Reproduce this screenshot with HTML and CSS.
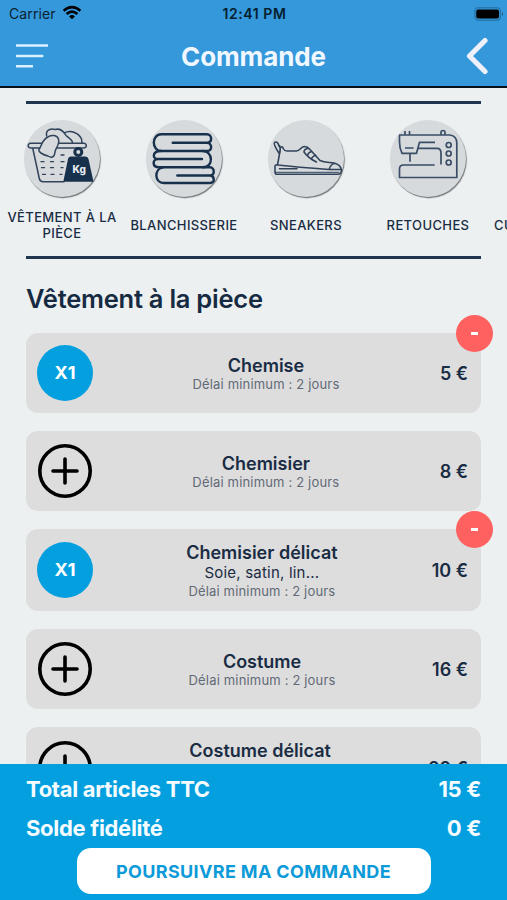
FILE: index.html
```html
<!DOCTYPE html>
<html lang="fr">
<head>
<meta charset="utf-8">
<title>Commande</title>
<link rel="stylesheet" href="styles.css">
</head>
<body>
<div class="app">
  <header class="header">
    <div class="status">
      <div class="carrier"><span>Carrier</span>
        <svg width="20" height="15" viewBox="0 0 20 15" fill="none" stroke="#000" stroke-width="2.6"><path d="M1.6 5.8Q10 -1.4 18.4 5.8"/><path d="M4.6 9Q10 4.4 15.4 9"/><path d="M7 11.4Q10 8.8 13 11.4L10 14.2Z" fill="#000" stroke="none"/></svg>
      </div>
      <div class="clock">12:41 PM</div>
      <svg class="battery" width="30" height="14" viewBox="0 0 30 14"><rect x=".8" y=".8" width="25.6" height="12.4" rx="3.6" fill="none" stroke="#2878b0" stroke-width="1.4"/><rect x="2.2" y="2.400" width="22.800" height="9.2" rx="2" fill="#000"/><path d="M28 5q2 2 0 4z" fill="#1c567f"/></svg>
    </div>
    <div class="nav">
      <svg width="32" height="26" viewBox="0 0 32 26" stroke="#d8f0ff" stroke-width="2.600"><path d="M0 2.5H32M0 13H27.3M0 23.300H17"/></svg>
      <h1>Commande</h1>
      <svg width="24" height="38" viewBox="0 0 24 38" fill="none" stroke="#eef0fa" stroke-width="5.2" stroke-linecap="round" stroke-linejoin="round"><path d="M20 3.500L4.500 19L20 34.500"/></svg>
    </div>
  </header>

  <main>
    <div class="categories">
      <div class="cat"><div class="disc">
        <svg viewBox="0 0 76 78" fill="none" stroke="#31435a" stroke-width="1.5" stroke-linejoin="round" stroke-linecap="round">
          <path d="M17.500 23.300H6.500a2.300 2.300 0 0 0 0 4.600H15.500M33.500 27.900H60a2.300 2.300 0 0 0 0-4.600H35M8.700 28L15.300 58.500Q16 61.700 19 61.700H40"/>
          <path d="M22.700 16C21 9 28 8.500 31 9.500C36 8 39 11 41 14C43 18 48 18 48.500 23M40 13C47 9.500 55 13 57.500 19L58 23"/>
          <path d="M24.300 16.700C28 14.500 33 15 34.500 19C36 25 31.500 28 31 32C30.500 38 27 38 24 36C20 35 13 32 15.300 29C18 25 18 19.500 24.300 16.700Z"/>
          <path d="M37 35H40M17 41.700H20M26.500 41.700H29.500M37 41.700H40M17.500 47.700H20.500M26.500 47.700H29.500M37 47.700H39M18.500 54.300H21.500M27 54.300H30M36 54.300H38" stroke-width="1.300"/>
          <path d="M46.500 36.500H61.500Q64 36.500 64.500 39L69.500 61.700H39.300L44 39Q44.500 36.500 46.500 36.500Z" fill="#17304c" stroke="none"/>
          <circle cx="54.300" cy="32" r="3.500" stroke="#17304c" stroke-width="3"/>
        </svg><span class="kg">Kg</span></div><p>VÊTEMENT À LA PIÈCE</p></div>
      <div class="cat"><div class="disc">
        <svg viewBox="0 0 76 78" fill="none" stroke="#17304c" stroke-width="2.400" stroke-linecap="round" stroke-linejoin="round">
          <path d="M61 14.300H15.500C5 14.300 5.500 31 15.500 31H61C67 31 66 22.700 61 22.700H26.700M61 22.700C67 22.700 66 14.300 61 14.300"/>
          <path d="M15 31C6 31 6 39 12 39C6 39 6 47.300 13 47.300H57C68 47.300 67 31 57 31M12 39H56"/>
          <path d="M17 47.300C8 49 8 63 18 63H64C69.500 63 68.500 55.500 64 55.500H31.300M64 55.500C69.500 55.500 68.500 47.300 64 47.300H57"/>
        </svg></div><p>BLANCHISSERIE</p></div>
      <div class="cat"><div class="disc">
        <svg viewBox="0 0 76 78" fill="none" stroke="#31435a" stroke-width="1.600" stroke-linecap="round" stroke-linejoin="round">
          <path d="M9.500 45L11.500 34C9 30 5 24 6.500 22.500Q9.500 20.500 11 26L12.500 28Q14 25 15.500 29Q16.500 31 19 31H28.500C32 31 33 26.500 36.500 26.500Q39.500 26.500 42 29.500L52 40.500C57 43 62 42 66 43C70 44 73 47 73.500 50Q73.500 54.300 70 54.300H9Q7 54.300 7 52V46.500Q7 44.500 9.500 45C27 47 47 48.500 61 49.500H73M11.500 48.700H29M61 49.500Q63 43.500 67 43.500M36 32Q36 29 40 28.500M39.500 36Q40 32 44 31.500M43.500 39.500Q44 36 48 35.500M36 32Q40 38 48.500 42M11.500 25.500Q13 29 11.500 34"/>
          <path d="M8 52.300H71" stroke-width="1"/>
        </svg></div><p>SNEAKERS</p></div>
      <div class="cat"><div class="disc">
        <svg viewBox="0 0 76 78" fill="none" stroke="#3a4d67" stroke-width="1.700" stroke-linejoin="round">
          <path d="M9 15H60Q66.800 16 66.800 23V57.500H9.500V49Q9.500 45 13.500 45H44.700M9.500 15V22Q9.500 28 12 33.300H26.500L29.500 22.300H45M28.500 28.300H47Q51 28.300 51 33V44.500M20 33.300V41.700M15 28H23.500M15 14.500V11M19.500 14.500V11M51 14.500V12.500Q51 10.500 53 10.500T55 12.500V14.500"/><circle cx="58.700" cy="25" r="2.500"/><circle cx="58.700" cy="33.500" r="2.500"/><circle cx="58.700" cy="42.500" r="2.500"/>
        </svg></div><p>RETOUCHES</p></div>
      <div class="cat"><div class="disc"></div><p>CUIRS ET PEAUX</p></div>
    </div>

    <h2>Vêtement à la pièce</h2>

    <div class="items">
      <div class="card"><div class="qty">X1</div><div class="info"><b>Chemise</b><small>Délai minimum : 2 jours</small></div><div class="price">5 €</div><div class="minus"></div></div>
      <div class="card"><svg class="plus" viewBox="0 0 56 56"><circle cx="28" cy="28" r="25.200"/><path d="M28 16V40M16 28H40"/></svg><div class="info"><b>Chemisier</b><small>Délai minimum : 2 jours</small></div><div class="price">8 €</div></div>
      <div class="card tall"><div class="qty">X1</div><div class="info"><b>Chemisier délicat</b><span>Soie, satin, lin...</span><small>Délai minimum : 2 jours</small></div><div class="price">10 €</div><div class="minus"></div></div>
      <div class="card"><svg class="plus" viewBox="0 0 56 56"><circle cx="28" cy="28" r="25.200"/><path d="M28 16V40M16 28H40"/></svg><div class="info"><b>Costume</b><small>Délai minimum : 2 jours</small></div><div class="price">16 €</div></div>
      <div class="card tall"><svg class="plus" viewBox="0 0 56 56"><circle cx="28" cy="28" r="25.200"/><path d="M28 16V40M16 28H40"/></svg><div class="info"><b>Costume délicat</b></div><div class="price">20 €</div></div>
    </div>
  </main>

  <footer>
    <div class="row"><span>Total articles TTC</span><span>15 €</span></div>
    <div class="row"><span>Solde fidélité</span><span>0 €</span></div>
    <button>POURSUIVRE MA COMMANDE</button>
  </footer>
</div>
</body>
</html>
```

FILE: styles.css
```css
* { box-sizing: border-box; }
body { margin: 0; font-family: Inter, "Liberation Sans", sans-serif; color: #1a2c44; }
h1, h2, p { margin: 0; }
svg { display: block; flex: none; }
.app { width: 507px; height: 900px; display: flex; flex-direction: column; overflow: hidden; background: #ecf0f1; }

.header { flex: none; height: 88px; background: #3498db; border-bottom: 2px solid #06131c; }
.status { height: 28px; padding: 0 7px 0 9px; display: grid; grid-template-columns: 1fr auto 1fr; align-items: center; font-size: 14px; color: #0c2230; }
.carrier { display: flex; align-items: center; gap: 6px; letter-spacing: .1px; margin-top: -1px; }
.carrier svg { margin-top: -2px; }
.clock { font-weight: 600; color: #06202f; font-size: 14px; letter-spacing: .55px; margin-top: -1px; }
.battery { justify-self: end; margin: -1px -4px 0 0; }
.nav { height: 56px; padding: 0 18px 0 16px; display: flex; align-items: center; justify-content: space-between; }
h1 { font-size: 26px; font-weight: 650; color: #f0f7ff; letter-spacing: -.1px; position: relative; left: -3px; }

main { flex: 1; min-height: 0; overflow: hidden; padding: 13px 26px 0; }
.categories { height: 158px; border-top: 3px solid #20364f; border-bottom: 3px solid #20364f; margin-bottom: 25px; display: flex; }
.cat { flex: none; width: 122px; height: 150px; margin-top: 16px; position: relative; left: -25px; display: flex; flex-direction: column; align-items: center; }
.disc { flex: none; position: relative; width: 76px; height: 77px; border-radius: 50%; background: #d7dadd; box-shadow: .8px 1.200px 1px #73767a; }
.disc svg { width: 76px; height: 78px; }
.kg { position: absolute; left: 48.500px; top: 43px; font-size: 10px; font-weight: 800; color: #e8edf2; }
.cat p { height: 36px; margin-top: 10px; width: 120px; display: flex; align-items: center; justify-content: center; text-align: center; font-size: 13px; font-weight: 500; line-height: 16px; letter-spacing: .38px; }
h2 { font-size: 25.500px; line-height: 30px; height: 49px; font-weight: 600; letter-spacing: -.25px; color: #162a42; }

.items { display: flex; flex-direction: column; gap: 18.500px; }
.card { position: relative; flex: none; height: 79.500px; padding: 0 13px 0 11px; border-radius: 12px; background: #ddd; display: flex; align-items: center; }
.tall { height: 81.500px; }
.qty { width: 56px; height: 56px; border-radius: 50%; background: #049fdf; color: #fff; font-size: 18px; font-weight: 700; display: flex; align-items: center; justify-content: center; }
.plus { width: 56px; height: 56px; fill: none; stroke: #000; stroke-width: 3.600; stroke-linecap: round; }
.info { flex: 1; padding-top: 2px; margin-left: -1px; display: flex; flex-direction: column; align-items: center; }
.info b { font-size: 18px; line-height: 21px; font-weight: 600; }
.info b:only-child { height: 57px; }
.info span { font-size: 15px; line-height: 20px; letter-spacing: .2px; }
.info small { font-size: 13px; line-height: 16px; letter-spacing: .17px; color: #626a77; }
.price { padding-top: 1px; font-size: 18px; font-weight: 600; }
.minus { position: absolute; right: -12px; top: -18px; width: 37px; height: 37px; border-radius: 50%; background: #ff6060; display: flex; align-items: center; justify-content: center; }
.minus::before { content: ""; width: 7px; height: 3px; margin-top: -1px; background: #fff; }

footer { flex: none; height: 136px; background: #049fdf; padding: 6px 26px 0; display: flex; flex-direction: column; }
.row { height: 39px; padding-bottom: 1px; display: flex; align-items: center; justify-content: space-between; color: #f4fcff; font-size: 22px; font-weight: 650; letter-spacing: -.3px; }
button { align-self: center; width: 354px; height: 46px; border: 0; border-radius: 14px; background: #fff; color: #0d9ad8; font: 700 18px Inter, sans-serif; letter-spacing: .35px; white-space: nowrap; }
```
